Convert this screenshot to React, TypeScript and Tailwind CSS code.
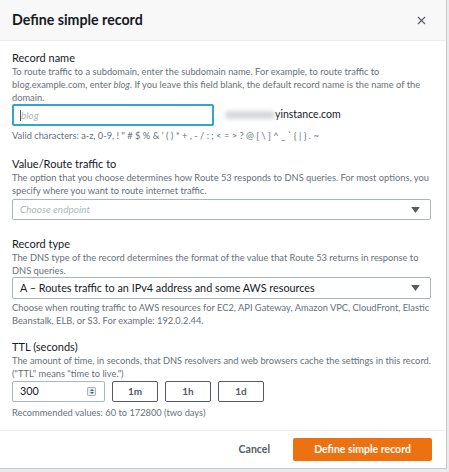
import { X } from "lucide-react";

const Caret = () => (
  <svg width="9" height="6" viewBox="0 0 10 7" className="text-[#545b64]">
    <path d="M0 0h10L5 7z" fill="currentColor" />
  </svg>
);

const Label = ({ children }: { children: React.ReactNode }) => (
  <div className="text-[11px] leading-[14px] text-[#16191f]">{children}</div>
);

const Desc = ({ children, className = "" }: { children: React.ReactNode; className?: string }) => (
  <p className={`whitespace-nowrap text-[9.3px] leading-[13px] text-[#687078] ${className}`}>{children}</p>
);

export default function App() {
  return (
    <div className="h-[472px] w-[449px] bg-[#e9ebed] font-['Lato',sans-serif]">
      <div className="flex h-[469px] w-[447px] flex-col overflow-hidden border-r border-b border-[#c6c8ca] bg-white">
        {/* Header */}
        <div className="flex h-[41px] shrink-0 items-center justify-between border-b border-[#eaeded] bg-[#f8f8f8] pl-3 pr-[18px]">
          <h2 className="text-[14.2px] font-bold text-[#16191f]">Define simple record</h2>
          <X className="h-[13px] w-[13px] text-[#545b64]" strokeWidth={2} />
        </div>

        <div className="flex shrink-0 flex-col px-3 pt-[10px]">
          {/* Record name */}
          <Label>Record name</Label>
          <Desc>
            To route traffic to a subdomain, enter the subdomain name. For example, to route traffic to
            <br />
            blog.example.com, enter <i>blog</i>. If you leave this field blank, the default record name is the name of the
            <br />
            domain.
          </Desc>
          <div className="flex items-center">
            <div className="flex h-[22px] w-[202px] items-center rounded-[2px] border-2 border-[#2fa7c9] px-[6px]">
              <span className="h-[11px] w-px bg-[#545b64]" />
              <span className="text-[10px] italic text-[#aab7b8]">blog</span>
            </div>
            <div className="ml-[11px] flex items-center">
              <span className="h-[8px] w-[50px] rounded-full bg-[#d5d8da] blur-[2px]" />
              <span className="text-[10.5px] text-[#16191f]">yinstance.com</span>
            </div>
          </div>
          <p className="mt-[4px] text-[9.3px] leading-[12px] text-[#687078]">
            Valid characters: a-z, 0-9, ! " # $ % &amp; ' ( ) * + , - / : ; &lt; = &gt; ? @ [ \ ] ^ _ ` {"{"} | {"}"} . ~
          </p>

          {/* Value/Route traffic to */}
          <div className="mt-[15px]">
            <Label>Value/Route traffic to</Label>
          </div>
          <Desc>
            The option that you choose determines how Route 53 responds to DNS queries. For most options, you
            <br />
            specify where you want to route internet traffic.
          </Desc>
          <div className="mt-[2px] flex h-[21px] w-[419px] items-center justify-between rounded-[2px] border border-[#aab7b8] pl-[7px] pr-[10px]">
            <span className="text-[10px] italic text-[#aab7b8]">Choose endpoint</span>
            <Caret />
          </div>

          {/* Record type */}
          <div className="mt-[17px]">
            <Label>Record type</Label>
          </div>
          <Desc>
            The DNS type of the record determines the format of the value that Route 53 returns in response to
            <br />
            DNS queries.
          </Desc>
          <div className="flex h-[22px] w-[419px] items-center justify-between rounded-[2px] border border-[#aab7b8] pl-[7px] pr-[10px]">
            <span className="text-[10.8px] text-[#16191f]">A – Routes traffic to an IPv4 address and some AWS resources</span>
            <Caret />
          </div>
          <Desc className="mt-[2px]">
            Choose when routing traffic to AWS resources for EC2, API Gateway, Amazon VPC, CloudFront, Elastic
            <br />
            Beanstalk, ELB, or S3. For example: 192.0.2.44.
          </Desc>

          {/* TTL */}
          <div className="mt-[13px]">
            <Label>TTL (seconds)</Label>
          </div>
          <Desc>
            The amount of time, in seconds, that DNS resolvers and web browsers cache the settings in this record.
            <br />
            ("TTL" means "time to live.")
          </Desc>
          <div className="mt-[1px] flex items-center gap-[7px]">
            <div className="flex h-[21px] w-[93px] items-center justify-between rounded-[2px] border border-[#aab7b8] pl-[7px] pr-[8px]">
              <span className="text-[10.8px] text-[#16191f]">300</span>
              <span className="flex h-[9px] w-[9px] flex-col items-center justify-center gap-[1px] rounded-[1px] border border-[#aab7b8] bg-[#eaeded]">
                <span className="h-0 w-0 border-x-[2.5px] border-b-[2.5px] border-x-transparent border-b-[#545b64]" />
                <span className="h-0 w-0 border-x-[2.5px] border-t-[2.5px] border-x-transparent border-t-[#545b64]" />
              </span>
            </div>
            {["1m", "1h", "1d"].map((t) => (
              <div
                key={t}
                className="flex h-[21px] w-[46px] items-center justify-center rounded-[2px] border border-[#545b64] text-[10px] font-bold text-[#545b64]"
              >
                {t}
              </div>
            ))}
          </div>
          <p className="mt-[5px] text-[9.3px] leading-[12px] text-[#687078]">Recommended values: 60 to 172800 (two days)</p>
        </div>

        {/* Footer */}
        <div className="mt-auto flex h-[38px] shrink-0 items-center justify-end gap-[23px] border-t border-[#eaeded] pl-3 pr-[14px]">
          <span className="text-[10.5px] font-bold text-[#545b64]">Cancel</span>
          <button className="h-[23px] w-[139px] rounded-[2px] bg-[#ec7211] text-[10.5px] font-bold text-white">
            Define simple record
          </button>
        </div>
      </div>
    </div>
  );
}
